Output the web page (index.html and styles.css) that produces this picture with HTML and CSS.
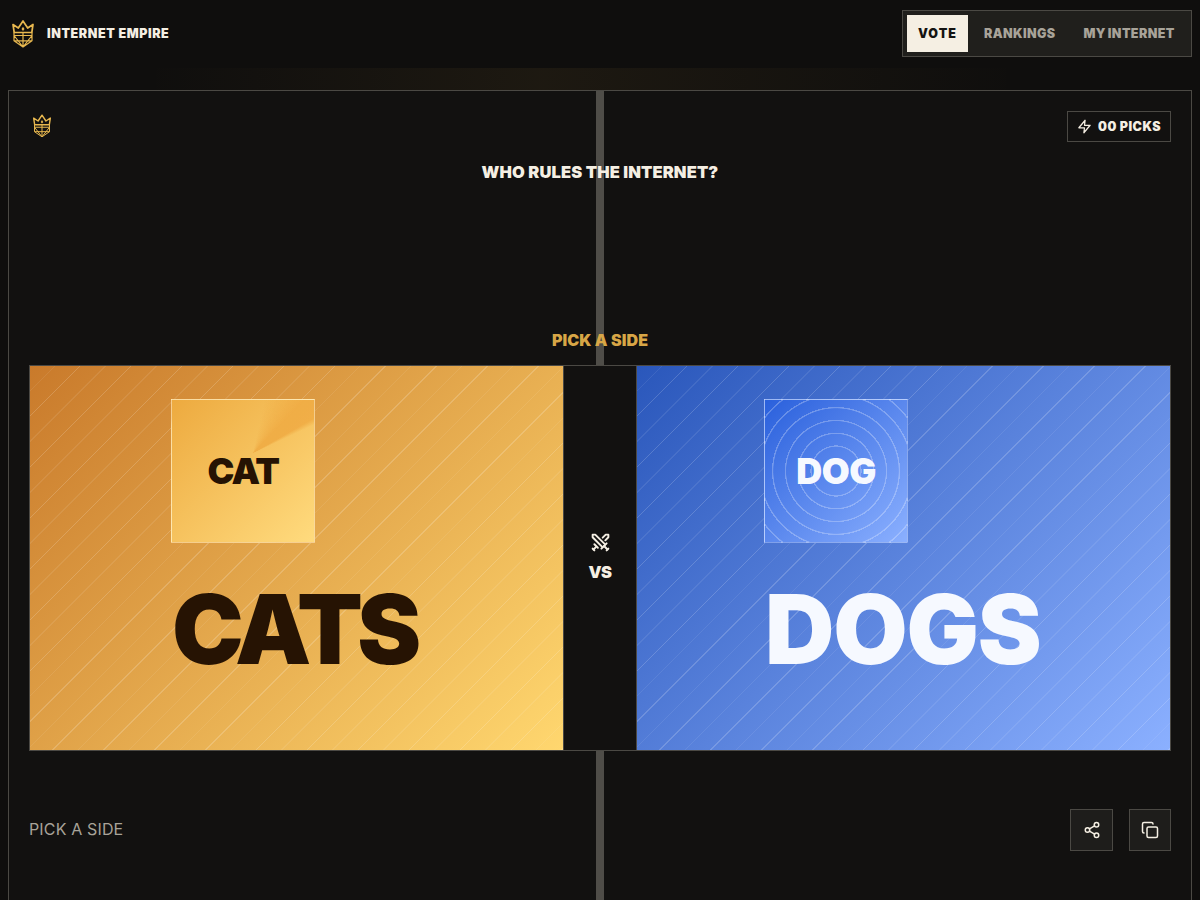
FILE: index.html
```html
<!DOCTYPE html>
<html lang="en">
<head>
  <meta charset="UTF-8" />
  <meta name="viewport" content="width=device-width, initial-scale=1.0"/>
  <title>Internet Empire</title>
  <link rel="stylesheet" href="styles.css">
</head>
<body>

  <svg class="defs" width="0" height="0" aria-hidden="true">
    <symbol id="crown" viewBox="0 0 24 28">
      <path d="M2 4.500l5.300 3.500L12 1l4.700 7L22 4.500 20.800 12.500H3.200z" fill="none" stroke="currentColor" stroke-width="1.700" stroke-linejoin="round"/>
      <path d="M12 6.800l1.500 2.300L12 11l-1.500-1.900z" fill="currentColor"/>
      <path d="M3 12.500v8.300L12 27l9-6.200v-8.300M3 15.500h18M3 20.800h18M3 15.500L12 27l9-11.500M12 12.500V27" fill="none" stroke="currentColor" stroke-width="1.200" stroke-linejoin="round"/>
    </symbol>
  </svg>

  <header class="topbar">
    <div class="brand">
      <svg class="brand-logo"><use href="#crown"/></svg>
      <span>INTERNET EMPIRE</span>
    </div>
    <nav class="tabs">
      <a class="tab active">VOTE</a>
      <a class="tab">RANKINGS</a>
      <a class="tab">MY INTERNET</a>
    </nav>
  </header>

  <main class="panel">
    <div class="spine"></div>

    <div class="panel-top">
      <svg class="panel-logo"><use href="#crown"/></svg>
      <div class="picks">
        <svg viewBox="0 0 24 24" fill="none" stroke="currentColor" stroke-width="2" stroke-linecap="round" stroke-linejoin="round"><polygon points="13 2 3 14 12 14 11 22 21 10 12 10 13 2"/></svg>
        <span>00 PICKS</span>
      </div>
    </div>

    <h1 class="question">WHO RULES THE INTERNET?</h1>
    <p class="prompt">PICK A SIDE</p>

    <section class="arena">
      <button class="side cats">
        <span class="stack">
          <span class="thumb thumb-cat">CAT</span>
          <span class="side-name">CATS</span>
        </span>
      </button>
      <div class="versus">
        <svg viewBox="0 0 24 24" fill="none" stroke="currentColor" stroke-width="2.200" stroke-linecap="round" stroke-linejoin="round"><polyline points="14.500 17.500 3 6 3 3 6 3 17.500 14.500"/><line x1="13" y1="19" x2="19" y2="13"/><line x1="16" y1="16" x2="20" y2="20"/><line x1="19" y1="21" x2="21" y2="19"/><polyline points="14.500 6.500 18 3 21 3 21 6 17.500 9.500"/><line x1="5" y1="14" x2="9" y2="18"/><line x1="7" y1="17" x2="4" y2="20"/><line x1="3" y1="19" x2="5" y2="21"/></svg>
        <span>VS</span>
      </div>
      <button class="side dogs">
        <span class="stack">
          <span class="thumb thumb-dog">DOG</span>
          <span class="side-name">DOGS</span>
        </span>
      </button>
    </section>

    <div class="panel-foot">
      <span class="status">PICK A SIDE</span>
      <div class="actions">
        <button class="icon-btn share">
          <svg viewBox="0 0 24 24" fill="none" stroke="currentColor" stroke-width="2" stroke-linecap="round" stroke-linejoin="round"><circle cx="18" cy="5" r="3"/><circle cx="6" cy="12" r="3"/><circle cx="18" cy="19" r="3"/><line x1="8.590" y1="13.510" x2="15.420" y2="17.490"/><line x1="15.410" y1="6.510" x2="8.590" y2="10.490"/></svg>
        </button>
        <button class="icon-btn">
          <svg viewBox="0 0 24 24" fill="none" stroke="currentColor" stroke-width="2" stroke-linecap="round" stroke-linejoin="round"><rect x="8" y="8" width="14" height="14" rx="2"/><path d="M4 16c-1.100 0-2-.9-2-2V4c0-1.100.9-2 2-2h10c1.100 0 2 .9 2 2"/></svg>
        </button>
      </div>
    </div>
  </main>

</body>
</html>
```

FILE: styles.css
```css
:root {
  --bg-color: #0f0e0d;
  --panel-bg: #121110;
  --line-color: #4b4944;
  --cream: #f5efe3;
  --gold: #d8a646;
  --muted: #a8a399;
  --stripes: repeating-linear-gradient(135deg, transparent 0 17px, rgba(255, 255, 255, 0.08) 17px 18px, transparent 18px 35px, rgba(255, 255, 255, 0.17) 35px 36px);
}

* {
  margin: 0;
  padding: 0;
  box-sizing: border-box;
}

html, body {
  height: 900px;
  overflow: hidden;
}

body {
  font-family: Inter, 'Liberation Sans', sans-serif;
  background: var(--bg-color);
  color: var(--cream);
  padding: 0 8px;
}

.defs {
  display: block;
  height: 0;
}

.topbar {
  height: 90px;
  padding: 10px 8px 33px 11px;
  display: flex;
  align-items: center;
  justify-content: space-between;
  margin: 0 -8px;
  background: linear-gradient(90deg, transparent 12%, rgba(216, 166, 70, 0.07) 45%, transparent 85%) no-repeat 0 68px / 100% 22px;
}

.brand {
  display: flex;
  align-items: center;
  gap: 12px;
  font-size: 12.500px;
  font-weight: 900;
  letter-spacing: 0.58px;
}

.brand-logo {
  width: 24px;
  height: 28px;
  color: #e8b84f;
}

.tabs {
  display: flex;
  gap: 4px;
  padding: 4px;
  width: 290px;
  height: 47px;
  background: #201f1c;
  border: 1px solid var(--line-color);
}

.tab {
  display: flex;
  align-items: center;
  padding: 0 12px;
  font-size: 12.500px;
  font-weight: 900;
  letter-spacing: 0.4px;
  word-spacing: -1px;
  white-space: nowrap;
  color: var(--muted);
}

.tab.active {
  padding: 0 11px;
  background: var(--cream);
  color: #141311;
  letter-spacing: 1px;
}

.panel {
  position: relative;
  height: 810px;
  padding: 20px 20px 0;
  background: var(--panel-bg);
  border: 1px solid var(--line-color);
  border-bottom: 0;
}

.spine {
  position: absolute;
  top: 0;
  bottom: 0;
  left: 587px;
  width: 8px;
  background: #4f4d48;
}

.panel-top {
  position: relative;
  display: flex;
  align-items: center;
  justify-content: space-between;
  height: 31px;
  padding-left: 3px;
}

.panel-logo {
  width: 20px;
  height: 24px;
  margin-top: -2px;
  color: #e8b84f;
}

.picks {
  display: flex;
  align-items: center;
  gap: 6px;
  width: 104px;
  height: 31px;
  padding-left: 9px;
  background: var(--panel-bg);
  border: 1px solid var(--line-color);
  font-size: 12.500px;
  font-weight: 900;
  letter-spacing: 0.5px;
}

.picks svg {
  width: 15px;
  height: 15px;
}

.question {
  position: relative;
  margin-top: 20px;
  height: 20px;
  text-align: center;
  font-size: 16.500px;
  line-height: 20px;
  font-weight: 900;
  letter-spacing: 0.12px;
}

.prompt {
  position: relative;
  margin-top: 148px;
  height: 20px;
  text-align: center;
  font-size: 16px;
  line-height: 20px;
  font-weight: 900;
  letter-spacing: 0.1px;
  color: var(--gold);
}

.arena {
  position: relative;
  margin-top: 15px;
  display: grid;
  grid-template-columns: 1fr 72px 1fr;
  height: 386px;
  background: var(--panel-bg);
  border: 1px solid var(--line-color);
}

.side {
  display: flex;
  align-items: center;
  justify-content: center;
  padding-bottom: 30px;
  border: 0;
  font-family: inherit;
  cursor: pointer;
}

.cats {
  color: #261303;
  background: var(--stripes), linear-gradient(135deg, #c97a2b, #ffd76f);
  border-right: 1px solid var(--line-color);
}

.dogs {
  color: #f6f9ff;
  background: var(--stripes), linear-gradient(135deg, #2a57bb, #8bb0ff);
  border-left: 1px solid var(--line-color);
}

.stack {
  display: flex;
  flex-direction: column;
  align-items: flex-start;
  gap: 28px;
}

.cats .stack {
  width: 251px;
}

.dogs .stack {
  width: 279px;
}

.thumb {
  display: flex;
  align-items: center;
  justify-content: center;
  width: 144px;
  height: 144px;
  font-size: 36px;
  font-weight: 900;
  border: 1px solid rgba(255, 255, 255, 0.4);
}

.thumb-cat {
  letter-spacing: -1.500px;
  background:
    conic-gradient(from 12deg at 57% 37.500%, transparent 0, rgba(238, 165, 60, 0.7) 32deg 48deg, transparent 53deg),
    linear-gradient(135deg, #edaa3f, #ffdb7e);
}

.thumb-dog {
  letter-spacing: -0.500px;
  background:
    repeating-radial-gradient(circle at center, transparent 0 11.200px, rgba(255, 255, 255, 0.26) 11.800px 12.800px),
    linear-gradient(135deg, #2a60dc, #8bb0ff);
}

.side-name {
  font-size: 96px;
  line-height: 116px;
  font-weight: 900;
  white-space: nowrap;
}

.cats .side-name {
  margin-left: 1px;
  letter-spacing: -5.500px;
}

.dogs .side-name {
  margin-left: 1px;
  letter-spacing: -1.200px;
}

.versus {
  display: flex;
  flex-direction: column;
  align-items: center;
  justify-content: center;
  gap: 9px;
  font-size: 16.500px;
  font-weight: 900;
  letter-spacing: -0.5px;
}

.versus svg {
  width: 21px;
  height: 21px;
  margin-top: -2px;
}

.panel-foot {
  position: relative;
  margin-top: 58px;
  display: flex;
  align-items: center;
  justify-content: space-between;
}

.status {
  padding-bottom: 2px;
  font-size: 16px;
  letter-spacing: 0.15px;
  color: var(--muted);
}

.actions {
  display: flex;
  gap: 16px;
}

.icon-btn {
  display: flex;
  align-items: center;
  justify-content: center;
  width: 42px;
  height: 42px;
  background: #1e1d1b;
  border: 1px solid var(--line-color);
  color: var(--cream);
}

.icon-btn.share {
  width: 43px;
}

.icon-btn svg {
  width: 18px;
  height: 18px;
}
```
